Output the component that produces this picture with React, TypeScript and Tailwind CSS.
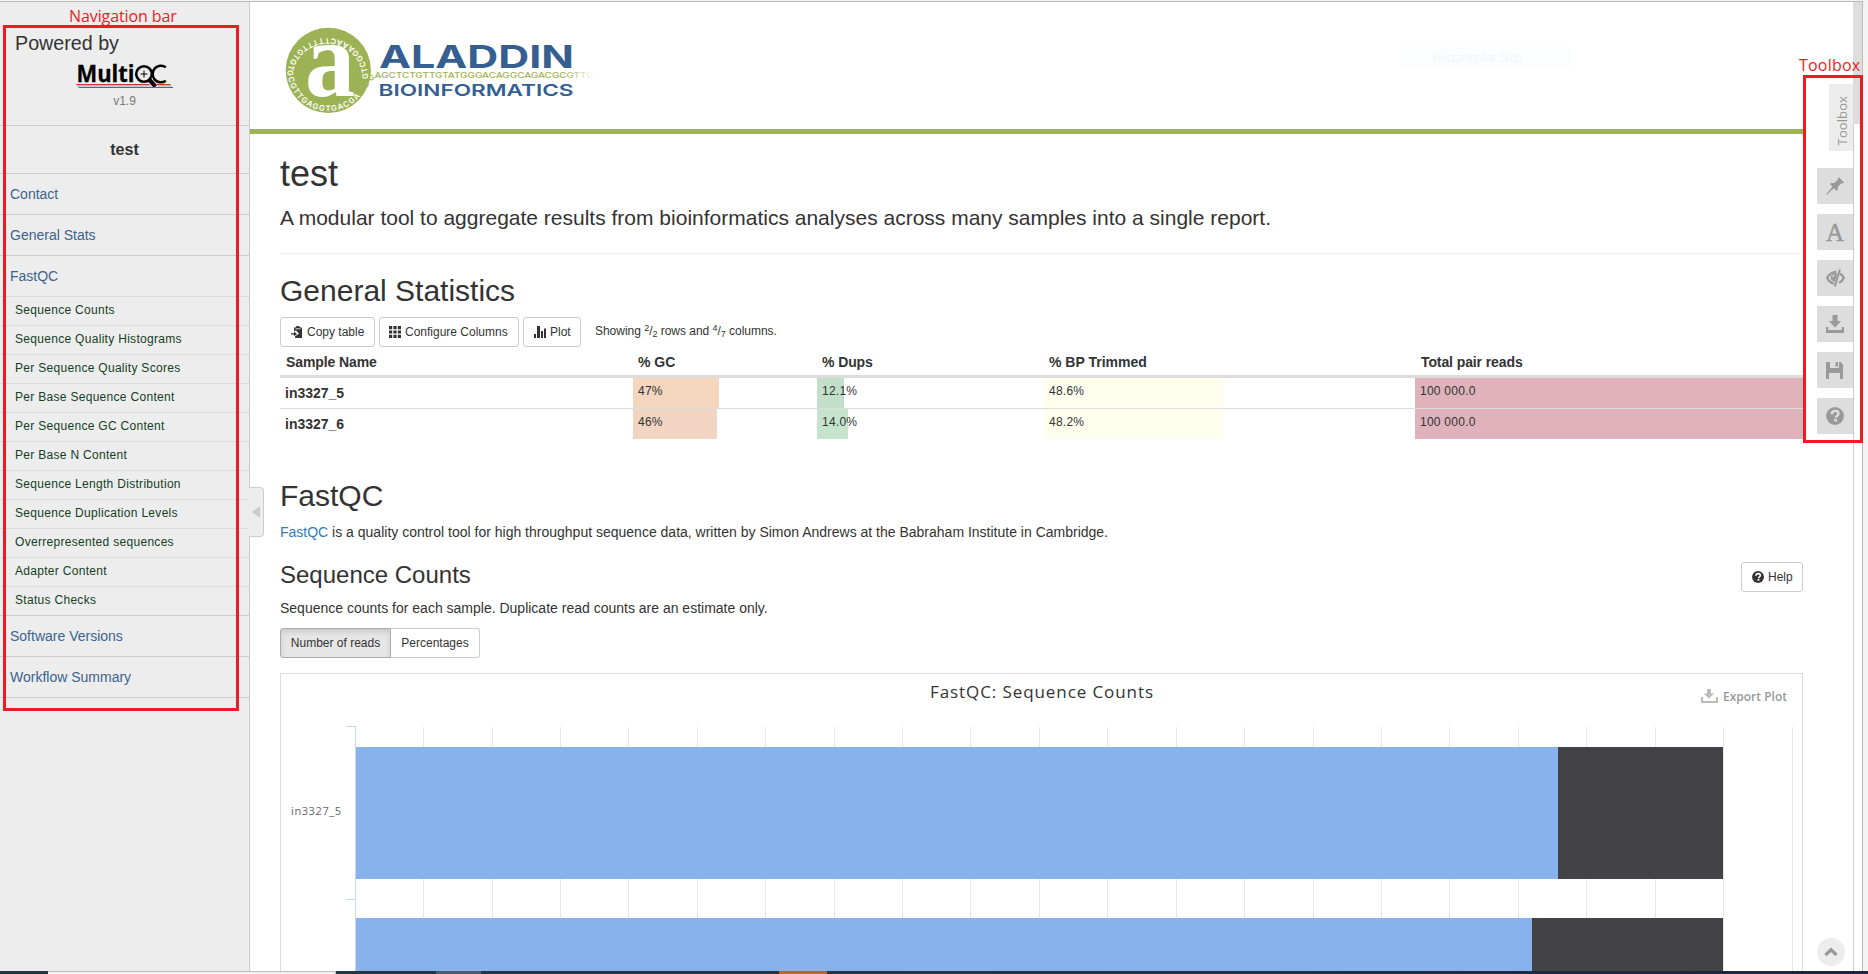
import React from "react";

const sections = ["Contact", "General Stats", "FastQC"];
const modules = [
  "Sequence Counts",
  "Sequence Quality Histograms",
  "Per Sequence Quality Scores",
  "Per Base Sequence Content",
  "Per Sequence GC Content",
  "Per Base N Content",
  "Sequence Length Distribution",
  "Sequence Duplication Levels",
  "Overrepresented sequences",
  "Adapter Content",
  "Status Checks",
];

function MultiQCLogo() {
  return (
    <svg width="98" height="28" viewBox="0 0 98 28" className="block overflow-visible">
      <text x="0.5" y="20" fontFamily="Open Sans, sans-serif" fontWeight="700" fontSize="24" textLength="58" lengthAdjust="spacingAndGlyphs" fill="#000" stroke="#000" strokeWidth="0.300">
        Multi
      </text>
      <circle cx="68" cy="12" r="7.800" fill="#ededed" stroke="#000" strokeWidth="2.600" />
      <path d="M64.500 12h7M68 8.500v7" stroke="#000" strokeWidth="1" />
      <path d="M73 17.500l6.500 7" stroke="#000" strokeWidth="4.200" />
      <path d="M89.800 5.300A8.300 8.300 0 1 0 89.800 18.700" fill="none" stroke="#000" strokeWidth="2.600" />
      <path d="M0 22h73l1 1.200H1z" fill="#c33" />
      <path d="M80 22h14l1 1.200H81z" fill="#c33" />
      <path d="M1 24h74M82 24h14" stroke="#a9ccae" strokeWidth="1.500" />
      <path d="M2.500 25.500H97" stroke="#3e6cb0" strokeWidth="1" />
    </svg>
  );
}

function AladdinLogo() {
  return (
    <svg width="320" height="90" viewBox="284 26 320 90" className="block overflow-visible">
      <defs>
        <path id="ring" d="M368.200 78.800A40.800 40.800 0 0 0 287.500 70.300A40.800 40.800 0 0 0 361.800 93.700" />
        <linearGradient id="fade" gradientUnits="userSpaceOnUse" x1="376" x2="594" y1="0" y2="0">
          <stop offset="0" stopColor="#9cb254" />
          <stop offset="0.86" stopColor="#9cb254" />
          <stop offset="1" stopColor="#9cb254" stopOpacity="0.05" />
        </linearGradient>
      </defs>
      <circle cx="328.300" cy="70.300" r="42.600" fill="#9cb254" />
      <text fontFamily="Inter, Liberation Sans, sans-serif" fontWeight="600" fontSize="7.800" letterSpacing="1.250" fill="#fff">
        <textPath href="#ring">GTCGGAAACTTTTTGTGTGCGTTGAGGTGACGAG</textPath>
      </text>
      <text x="305" y="96" fontFamily="Liberation Serif, serif" fontWeight="bold" fontSize="108" fill="#fff" textLength="50" lengthAdjust="spacingAndGlyphs">
        a
      </text>
      <g fontFamily="Inter, Liberation Sans, sans-serif" fontSize="7.500" fontWeight="600" fill="#9cb254">
        <text transform="translate(366.500 88.500) rotate(-55)">C</text>
        <text transform="translate(370.500 81.500) rotate(-35)">G</text>
      </g>
      <text x="379" y="67.800" fontFamily="Inter, Liberation Sans, sans-serif" fontWeight="700" fontSize="31.500" fill="#365f91" textLength="195" lengthAdjust="spacingAndGlyphs">
        ALADDIN
      </text>
      <text x="374.500" y="78.300" fontFamily="Inter, Liberation Sans, sans-serif" fontWeight="500" fontSize="7.500" fill="url(#fade)" textLength="219" lengthAdjust="spacingAndGlyphs">
        AGCTCTGTTGTATGGGACAGGCAGACGCGTTC
      </text>
      <text x="378.500" y="95.700" fontFamily="Inter, Liberation Sans, sans-serif" fontWeight="600" fontSize="16.500" fill="#365f91" textLength="195" lengthAdjust="spacingAndGlyphs">
        BIOINFORMATICS
      </text>
    </svg>
  );
}

function Sidebar() {
  return (
    <nav className="flex w-[250px] shrink-0 flex-col border-r border-[#ccc] bg-[#ededed]">
      <div className="flex h-[124px] flex-col border-b border-[#ccc]">
        <div className="mt-[30px] pl-[15px] text-[19.700px] leading-[22px] text-[#333]">Powered by</div>
        <div className="mt-[8px] pl-[76px]">
          <MultiQCLogo />
        </div>
        <div className="mt-[3px] text-center text-xs leading-[17px] text-[#777]">v1.9</div>
      </div>
      <div className="h-[48px] border-b border-[#ccc] text-center text-base font-bold leading-[47px] text-[#333]">test</div>
      {sections.map((s) => (
        <a key={s} className={`h-[41px] border-b pl-[10px] text-sm leading-[41px] text-[#3b638f] ${s === "FastQC" ? "border-[#ddd]" : "border-[#ccc]"}`}>
          {s}
        </a>
      ))}
      {modules.map((m, i) => (
        <a key={m} className={`h-[29px] border-b pl-[15px] text-xs leading-[26px] tracking-[0.3px] text-[#14401f] ${i === modules.length - 1 ? "border-[#ccc]" : "border-[#ddd]"}`}>
          {m}
        </a>
      ))}
      {["Software Versions", "Workflow Summary"].map((s) => (
        <a key={s} className="h-[41px] border-b border-[#ccc] pl-[10px] text-sm leading-[41px] text-[#3b638f]">
          {s}
        </a>
      ))}
    </nav>
  );
}

function HelpIcon({ size }: { size: number }) {
  return (
    <svg width={size} height={size} viewBox="0 0 18 18">
      <circle cx="9" cy="9" r="8.900" fill="currentColor" />
      <path d="M5.800 7.300C5.800 5 7.200 3.900 9.200 3.900c2 0 3.300 1 3.300 2.700 0 2.200-2.600 2.300-2.600 4.100" fill="none" stroke="var(--hole)" strokeWidth="2.400" />
      <path d="M8.300 12h2.700v2.500H8.300z" fill="var(--hole)" />
    </svg>
  );
}

const smallButton = "flex h-[30px] items-center rounded-[3px] border border-[#ccc] bg-white text-xs text-[#333]";

const rows = [
  { name: "in3327_5", gc: "47%", gcW: "w-[86px] bg-[#f4d5bd]", dup: "12.1%", dupW: "w-[27px] bg-[#c2dfca]", bp: "48.6%", bpW: "w-[180px]" },
  { name: "in3327_6", gc: "46%", gcW: "w-[84px] bg-[#f2d4c2]", dup: "14.0%", dupW: "w-[31px] bg-[#c5e3cd]", bp: "48.2%", bpW: "w-[179px]" },
];

const columns = "grid grid-cols-[353px_184px_227px_371px_388px]";

function Cell({ bar, children }: { bar: string; children: React.ReactNode }) {
  return (
    <div className={`h-[30px] whitespace-nowrap pl-[5px] text-xs leading-[26px] tracking-[0.25px] ${bar}`}>{children}</div>
  );
}

function StatsTable() {
  return (
    <div>
      <div className={`${columns} h-[31px] border-b-3 border-[#ddd] text-sm font-bold leading-[31px]`}>
        <div className="pl-[6px] tracking-[-0.1px]">Sample Name</div>
        <div className="pl-[5px]">% GC</div>
        <div className="pl-[5px] tracking-[-0.1px]">% Dups</div>
        <div className="pl-[5px]">% BP Trimmed</div>
        <div className="pl-[6px] tracking-[-0.1px]">Total pair reads</div>
      </div>
      {rows.map((r, i) => (
        <div key={r.name} className={`${columns} ${i === 0 ? "border-b border-[#ddd]" : ""}`}>
          <div className="h-[30px] pl-[5px] text-sm font-bold leading-[31px]">{r.name}</div>
          <Cell bar={r.gcW}>{r.gc}</Cell>
          <Cell bar={r.dupW}>{r.dup}</Cell>
          <Cell bar={`bg-[#ffffee] ${r.bpW}`}>{r.bp}</Cell>
          <Cell bar="bg-[#dfb2bc]">100 000.0</Cell>
        </div>
      ))}
    </div>
  );
}

function CountsPlot() {
  const step = 68.42;
  return (
    <svg width="1521" height="297" viewBox="281 674 1521 297" className="block" shapeRendering="crispEdges">
      {Array.from({ length: 21 }, (_, i) => (
        <rect key={i} x={Math.round(355 + step * (i + 1) - 0.3)} y="727" width="1" height="245" fill="#e6e6e6" />
      ))}
      <path d="M346 726.500h10M346 899.500h10M355.500 726v246" stroke="#ccd6eb" fill="none" />
      <rect x="356" y="747" width="1202" height="132" fill="#87b2eb" />
      <rect x="1558" y="747" width="165" height="132" fill="#434247" />
      <rect x="356" y="918" width="1176" height="54" fill="#87b2eb" />
      <rect x="1532" y="918" width="191" height="54" fill="#434247" />
      <g fontFamily="Open Sans, sans-serif">
        <text x="930" y="698" fontSize="17" fill="#333" textLength="223" lengthAdjust="spacing">FastQC: Sequence Counts</text>
        <text x="291" y="815" fontSize="11" fill="#666" textLength="50" lengthAdjust="spacing">in3327_5</text>
        <text x="1723" y="701" fontSize="12" fontWeight="600" fill="#999" textLength="64" lengthAdjust="spacing">Export Plot</text>
      </g>
      <path d="M1707 689h4v4.500h3.200l-5.200 5-5.200-5h3.200zM1701 697h2v4h13v-4h2v6h-17z" fill="#bbb" shapeRendering="auto" />
    </svg>
  );
}

function Toolbox() {
  const box = "flex size-9 items-center justify-center bg-[#ddd]";
  return (
    <aside className="absolute right-[15px] top-[84px] flex flex-col items-end text-[#999] [--hole:#ddd]">
      <div className="flex h-[67px] w-6 items-center justify-center bg-[#ededed] pl-px pt-[6px]">
        <span className="rotate-180 font-['Open_Sans',sans-serif] text-[13px] leading-[18px] tracking-[0.1px] [writing-mode:vertical-rl]">Toolbox</span>
      </div>
      <div className="mt-[17px] flex flex-col gap-[10px]">
        <div className={box}>
          <svg width="18" height="18" viewBox="0 0 18 18" fill="currentColor">
            <path d="M12.800.3L18 5.500 16.800 6.600 15.400 6.300 11.800 9.800 12 12.600 10.600 13.800 7.800 11.200.5 18 0 17.500 6.400 9.700 3.900 7.100 5 5.900 8.300 6.100 12 2.600 11.700 1.400z" />
          </svg>
        </div>
        <div className={box}>
          <span className="font-['Liberation_Serif',serif] text-[25px] leading-none [-webkit-text-stroke:0.5px_#999]">A</span>
        </div>
        <div className={box}>
          <svg width="19" height="18" viewBox="0 0 20 18">
            <path d="M11 2.600C6 2.600 3 5.500 1.300 9c1.400 2.800 3.700 5.200 7 5.800" fill="none" stroke="currentColor" strokeWidth="2.400" />
            <path d="M14.800 4.300C16.600 5.500 18 7.100 18.700 9c-1.100 2.300-2.700 4.100-5 5.200" fill="none" stroke="currentColor" strokeWidth="2.400" />
            <path d="M12 4.500A4.600 4.600 0 1 0 9.400 13z" fill="currentColor" />
            <path d="M6.800 8A2.500 2.500 0 0 1 9.300 5.800" stroke="#ddd" strokeWidth="1.200" fill="none" />
            <path d="M14.600 0l-5.300 18" stroke="currentColor" strokeWidth="2.200" />
          </svg>
        </div>
        <div className={box}>
          <svg width="18" height="18" viewBox="0 0 18 18" fill="currentColor">
            <path d="M6.500 0h5v6H15l-6 6.500L3 6h3.500zM0 12h2.200v3h13.600v-3H18v6H0z" />
          </svg>
        </div>
        <div className={`${box} pr-[2px]`}>
          <svg width="17" height="17" viewBox="0 0 17 17" fill="currentColor">
            <path d="M0 0h4v6h9V0h1.500L17 2.500V17h-3v-6H3v6H0z" />
            <path d="M9.500 0H12v4.500H9.500z" />
          </svg>
        </div>
        <div className={box}>
          <HelpIcon size={18} />
        </div>
      </div>
    </aside>
  );
}

export default function App() {
  return (
    <div className="relative flex h-[974px] w-[1868px] flex-col overflow-hidden bg-[#f4f4f4] font-['Liberation_Sans',Arial,sans-serif] text-[#333]">
      <div className="relative mt-px flex h-[970px] w-[1863px] border-r border-t border-[#bbb] bg-white">
        <Sidebar />
        <main className="flex w-[1553px] flex-col">
          <header className="h-[132px] shrink-0 border-b-5 border-[#9cb254] pl-[34px] pt-6">
            <AladdinLogo />
          </header>
          <div className="pl-[30px]">
            <h1 className="mt-[20px] text-4xl leading-[40px]">test</h1>
            <p className="mt-[9px] text-[21px] leading-[29px]">
              A modular tool to aggregate results from bioinformatics analyses across many samples into a single report.
            </p>
            <hr className="mt-[21px] border-t border-[#eee]" />
            <h2 className="mt-[20px] text-[30px] leading-[33px]">General Statistics</h2>
            <div className="mt-[10px] flex h-[30px]">
              <button className={`${smallButton} w-[95px] pl-[10px]`}>
                <svg width="12" height="12" viewBox="0 0 12 12" className="mr-[4px]" fill="#333">
                  <path d="M3 1.500h1.800L5.500 0h2.700L9 1.500h2V12H4v-1.500l4-3L5 4.500 3 5z" />
                  <path d="M0 7.200h3V5.500l3 2.400-3 2.300V8.500H0z" />
                  <path d="M4.500 2.800h5" stroke="#fff" strokeWidth="0.800" />
                </svg>
                Copy table
              </button>
              <button className={`${smallButton} ml-1 w-[140px] pl-[9px]`}>
                <svg width="12" height="12" viewBox="0 0 12 12" className="mr-[4px]" fill="#333">
                  <path d="M0 0h3.200v3.200H0zM4.400 0h3.200v3.200H4.400zM8.800 0H12v3.200H8.800zM0 4.400h3.200v3.200H0zM4.400 4.400h3.200v3.200H4.400zM8.800 4.400H12v3.200H8.800zM0 8.800h3.200V12H0zM4.400 8.800h3.200V12H4.400zM8.800 8.800H12V12H8.800z" />
                </svg>
                Configure Columns
              </button>
              <button className={`${smallButton} ml-1 w-[58px] pl-[10px]`}>
                <svg width="12" height="12" viewBox="0 0 12 12" className="mr-[4px]" fill="#333">
                  <path d="M0 8h2v4H0zM3 0h3v12H3zM7 5h2v7H7zM10 2.500h2V12h-2z" />
                </svg>
                Plot
              </button>
              <div className="ml-[14px] text-xs leading-[28px] tracking-[-0.03px]">
                Showing <sup className="text-[9px]">2</sup>/<sub className="text-[9px]">2</sub> rows and <sup className="text-[9px]">4</sup>/<sub className="text-[9px]">7</sub> columns.
              </div>
            </div>
            <StatsTable />
            <h2 className="mt-[40px] text-[30px] leading-[33px]">FastQC</h2>
            <p className="mt-[10px] text-sm leading-5">
              <a className="text-[#337ab7]">FastQC</a> is a quality control tool for high throughput sequence data, written by Simon Andrews at the Babraham Institute in Cambridge.
            </p>
            <div className="mt-[20px] flex items-start justify-between">
              <div>
                <h3 className="text-2xl leading-[26px]">Sequence Counts</h3>
                <p className="mt-[10px] text-sm leading-5">Sequence counts for each sample. Duplicate read counts are an estimate only.</p>
              </div>
              <button className={`${smallButton} w-[62px] gap-1 pl-[10px] [--hole:#fff]`}>
                <HelpIcon size={12} />
                Help
              </button>
            </div>
            <div className="mt-[10px] flex">
              <button className="h-[30px] w-[111px] rounded-l-[3px] border border-[#adadad] bg-[#e6e6e6] text-xs shadow-[inset_0_3px_5px_rgba(0,0,0,0.125)]">Number of reads</button>
              <button className="h-[30px] w-[89px] rounded-r-[3px] border border-l-0 border-[#ccc] bg-white text-xs">Percentages</button>
            </div>
            <div className="mt-[15px] border border-b-0 border-[#ddd]">
              <CountsPlot />
            </div>
          </div>
        </main>
        <div className="ml-[50px] w-[9px] border-l border-[#ccc]">
          <div className="-ml-px h-[122px] w-[9px] bg-[#ddd]" />
        </div>
      </div>

      <div className="absolute left-[249px] top-[487px] flex h-[50px] w-[15px] items-center rounded-r-[4px] border border-l-0 border-[#ccc] bg-[#ededed] pl-[3px]">
        <svg width="8" height="12" viewBox="0 0 8 12" fill="#ccc">
          <path d="M8 0v12L0 6z" />
        </svg>
      </div>

      <Toolbox />
      <button className="absolute left-[1817px] top-[938px] flex size-7 items-center justify-center rounded-full bg-[#ededed]">
        <svg width="14" height="10" viewBox="0 0 14 10">
          <path d="M1.500 8L7 2.800 12.500 8" fill="none" stroke="#999" strokeWidth="3.200" />
        </svg>
      </button>

      <div className="absolute left-[1401px] top-[46px] h-[22px] w-[173px] bg-[#fbfdff] pl-8 font-['Open_Sans',sans-serif] text-xs leading-[23px] tracking-[-0.3px] text-[#f3f5f7]">Rectangular Snip</div>

      <div className="absolute left-[69px] top-[5px] whitespace-nowrap font-['Open_Sans',sans-serif] text-base leading-[22px] tracking-[-0.1px] text-[#ed1c24]">Navigation bar</div>
      <div className="absolute left-[3px] top-[25px] h-[686px] w-[236px] border-3 border-[#ed1c24]" />
      <div className="absolute left-[1799px] top-[54px] whitespace-nowrap font-['Open_Sans',sans-serif] text-base leading-[22px] tracking-[0.2px] text-[#ed1c24]">Toolbox</div>
      <div className="absolute left-[1803px] top-[75px] h-[368px] w-[60px] border-3 border-[#ed1c24]" />

      <footer className="flex h-[3px] shrink-0 bg-[#20303f]">
        <div className="w-[48px] bg-[#213843]" />
        <div className="w-[288px] border-r border-t border-[#bbb] bg-[#f1f1f1]" />
        <div className="w-[100px] bg-[#213843]" />
        <div className="w-[45px] bg-[#4d5d6b]" />
        <div className="w-[298px] bg-[#213843]" />
        <div className="w-[48px] bg-[#ae6a3b]" />
        <div className="grow bg-linear-to-r from-[#213843] to-[#1c2642]" />
      </footer>
    </div>
  );
}
